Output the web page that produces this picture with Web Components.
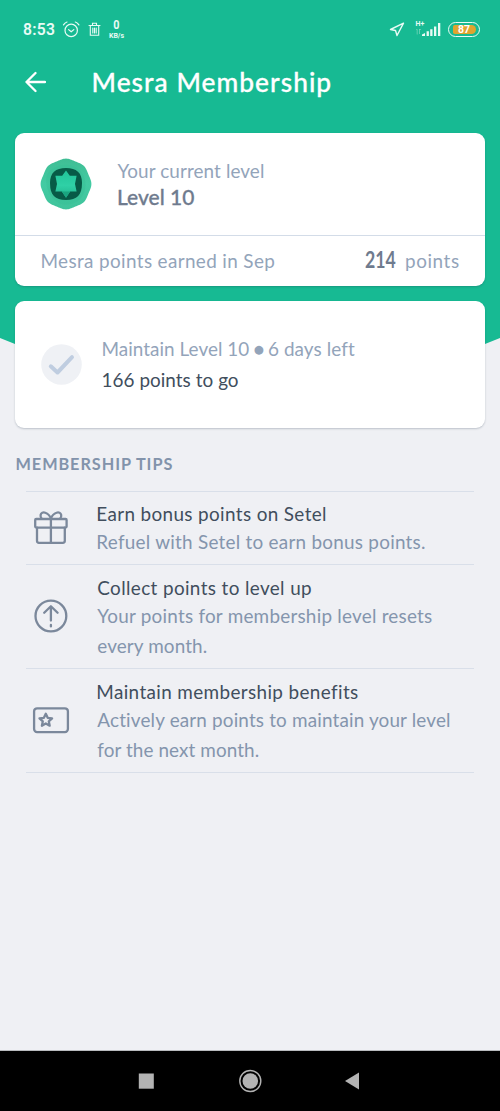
<!DOCTYPE html>
<html lang="en">
<head>
<meta charset="utf-8">
<title>Mesra Membership</title>
<style>
html,body{margin:0;padding:0;background:#eff0f4}
body{font-family:Lato,"Open Sans",sans-serif;font-size:18.9px;color:#414e5d}
</style>
</head>
<body>
<membership-screen></membership-screen>
<script>
const define=(name,html,setup)=>customElements.define(name,class extends HTMLElement{
  connectedCallback(){
    if(this.shadowRoot)return;
    const t=document.createElement('template');
    t.innerHTML=html;
    this.attachShadow({mode:'open'}).append(t.content.cloneNode(true));
    if(setup)setup(this);
  }
});

/* One line of text, tracked (or condensed) so that its glyphs span the given width. */
const ctx=document.createElement('canvas').getContext('2d');
define('fit-text','<style>:host{display:block;white-space:nowrap;width:var(--w)}span{display:inline-block;transform-origin:0 50%}</style><span><slot></slot></span>',el=>{
  const span=el.shadowRoot.querySelector('span'),cs=getComputedStyle(el),text=el.textContent,w=+el.getAttribute('w');
  ctx.font=`${cs.fontWeight} ${cs.fontSize} ${cs.fontFamily}`;
  ctx.letterSpacing='0.01px';
  const m=ctx.measureText(text);
  const ink=m.actualBoundingBoxRight+m.actualBoundingBoxLeft;
  el.style.setProperty('--w',w+'px');
  if(w>=ink)span.style.letterSpacing=(w-ink)/(text.length-1)+'px';
  else span.style.transform=`scaleX(${w/ink})`;
  span.style.marginLeft=m.actualBoundingBoxLeft+.5+'px';
});

define('status-bar',`<style>
:host{display:flex;height:58px;box-sizing:border-box;padding:19px 20px 0 22.5px;justify-content:space-between;color:#e9fbf5;font-family:Roboto,sans-serif}
.g{display:flex;align-items:flex-start}
.time{font-size:15.7px;font-weight:600;line-height:22px}
.rate{width:17px;margin-left:7px;text-align:center;display:flex;flex-direction:column;align-items:center;font-weight:700}
.zero{font-size:12px;line-height:11px;height:11px;transform:scaleX(.9);margin-top:1px}
.kb{font-size:7px;line-height:8px;height:8px;margin-top:1px;white-space:nowrap}
.bat{box-sizing:border-box;width:32px;height:15px;border:1.3px solid #e9fbf5;border-radius:8px;margin:3px 0 0 7px;display:flex;align-items:center;justify-content:center}
.bat span{width:23px;height:9px;border-radius:2px 5px 5px 2px;background:#dfa42f;color:#fff;font-size:10.5px;font-weight:700;line-height:9.5px;text-align:center}
.cell{display:flex;flex-direction:column;width:9px;margin:2px 0 0 10.5px;font-size:7px;line-height:7px;font-weight:700}
</style>
<div class="g"><fit-text class="time" w="32">8:53</fit-text>
<svg width="18" height="18" viewBox="0 0 18 18" style="margin:2px 0 0 7.5px" fill="none" stroke="#e9fbf5" stroke-width="1.2" stroke-linecap="round" stroke-linejoin="round"><circle cx="9.2" cy="9.4" r="6.2"/><path d="M6.6 8.6l2.6 2.2 2.6-2.2M1.5 3.9Q2.8 1.6 5 1M13.3 1q2.3.6 3.6 2.9"/></svg>
<svg width="13" height="16" viewBox="0 0 13 16" style="margin:3px 0 0 8px" fill="none" stroke="#e9fbf5" stroke-width="1.1" stroke-linecap="round"><path d="M1 3.5h11M4.5 3.2V1.2h4v2M2.3 3.6v9.6h8.4V3.6M4.8 6v5M6.5 6v5M8.2 6v5"/></svg>
<div class="rate"><span class="zero">0</span><span class="kb">KB/s</span></div></div>
<div class="g">
<svg width="16" height="16" viewBox="0 0 16 16" style="margin:3px 0 0" fill="none" stroke="#e9fbf5" stroke-width="1.4" stroke-linejoin="round"><path d="M14.5 1.2L1.5 7.5l5 1 1.5 5z"/></svg>
<div class="cell"><span>H+</span><svg width="8" height="7" viewBox="0 0 8 7" fill="none" stroke="#80d8bf" stroke-width=".7"><path d="M1.2 6.5v-5M.3 2L1.2 1M3.5 1v5M3 1.5h2"/></svg></div>
<svg width="19" height="14" viewBox="0 0 19 14" style="margin-top:3.5px;margin-left:-2.5px" fill="#e9fbf5"><path d="M0 13v-1.5l3-1.5v3zM4.6 8.3h2.3V13H4.6zM8.2 6.3h2.3V13H8.2zM12 3.5h2.3V13H12zM16 0h2.3v13H16z"/></svg>
<div class="bat"><span>87</span></div></div>`);

define('app-header',`<style>
:host{display:flex;height:75px;box-sizing:border-box;padding:4px 0 0 24px;color:#fff}
svg{margin-top:9px}
fit-text{font-size:26.3px;font-weight:500;line-height:40px;margin-left:47px;-webkit-text-stroke:.3px #fff}
</style>
<svg width="22" height="22" viewBox="0 0 22 22" fill="none" stroke="#fff" stroke-width="2.3" stroke-linecap="round" stroke-linejoin="round"><path d="M21 11H2.5M11.5 2l-9 9 9 9"/></svg>
<fit-text w="237">Mesra Membership</fit-text>`);

define('ui-card',`<style>
:host{display:block;background:#fff;border-radius:9px;margin:0 15px;box-sizing:border-box;box-shadow:0 1px 2px rgba(30,50,70,.24);overflow:hidden}
</style><slot></slot>`);

define('level-badge',`<style>:host{display:block;width:52px;height:52px}svg{display:block}</style>
<svg width="52" height="52" viewBox="-26 -26 52 52"><defs><linearGradient id="a" x1="0" y1="0" x2="0" y2="1"><stop offset="0" stop-color="#3fbd94"/><stop offset=".5" stop-color="#43cba3"/><stop offset="1" stop-color="#40c39b"/></linearGradient><linearGradient id="b" x1="0" y1="0" x2="0" y2="1"><stop offset="0" stop-color="#20c498"/><stop offset=".55" stop-color="#2fd0a6"/><stop offset="1" stop-color="#1fb48c"/></linearGradient></defs>
<path id="s" fill="url(#a)"/><path d="M-19.5 -8C-21 3-17 13-8 18.5C-2 22 8 21 14 15C21 8 21-4 16-11C9-20-3-21-10-17C-15-15-18-12-19.5-8Z" fill="#34bd94" opacity=".4"/>
<path d="M0-16C10.5-16 16-11 16-1C16 11 11 16 0 16C-11 16-16 11-16-1C-16-11-10.5-16 0-16Z" fill="#075b47"/>
<path d="M0-13.6L3.8-8.2H10.6L9 0L10.6 7.5H4.2L0 13.8L-4.2 7.5H-10.6L-9 0L-10.6-8.2H-3.8Z" fill="url(#b)"/><path d="M-4.2 7.5H4.2L0 13.8Z" fill="#1aa580"/></svg>`,el=>{
  /* scalloped edge with eight soft lobes */
  let d='';
  for(let i=0;i<144;i++){const t=i*Math.PI/72,r=24.9+.5*Math.cos(8*t);d+=(i?'L':'M')+(r*Math.cos(t)).toFixed(2)+' '+(r*Math.sin(t)).toFixed(2)}
  el.shadowRoot.getElementById('s').setAttribute('d',d+'Z');
});

define('level-summary',`<style>
:host{display:block;height:153px;color:#93a4ba}
.top{display:flex;height:102px;box-sizing:border-box;padding:25px 0 0 25px}
.t{margin:1px 0 0 25px}
.a{line-height:24px}
.b{font-size:21.5px;line-height:28px;font-weight:500;color:#6f7b8e;margin-left:.5px;-webkit-text-stroke:.3px #6f7b8e}
.bot{border-top:1px solid #d3dce8;display:flex;height:51px;box-sizing:border-box;padding:10px 26.5px 0 26px;line-height:27px;align-items:baseline}
.n{margin-left:auto;font-size:22px;font-weight:700;color:#6f7b8e}
.p{margin-left:10.5px}
</style>
<div class="top"><level-badge></level-badge><div class="t"><fit-text class="a" w="147">Your current level</fit-text><fit-text class="b" w="76">Level 10</fit-text></div></div>
<div class="bot"><fit-text w="233">Mesra points earned in Sep</fit-text><fit-text class="n" w="31">214</fit-text><fit-text class="p" w="53">points</fit-text></div>`);

define('level-goal',`<style>
:host{display:flex;height:127px;box-sizing:border-box;padding:33px 0 0 26px}
svg{margin-top:10px}
.t{margin-left:20px}
.a{display:flex;color:#93a4ba;line-height:30px;height:30px}
.dot{width:19.5px;text-align:center;font-family:"DejaVu Sans",sans-serif;font-size:11.5px}
.b{line-height:31px}
</style>
<svg width="41" height="41" viewBox="0 0 41 41"><circle cx="20.5" cy="20.5" r="20.3" fill="#eff1f5"/><path d="M9.8 22.3l6.7 6.2L31 13.2" fill="none" stroke="#bfcde0" stroke-width="4" stroke-linecap="round" stroke-linejoin="round"/></svg>
<div class="t"><div class="a"><fit-text w="147">Maintain Level 10</fit-text><span class="dot">●</span><fit-text w="86">6 days left</fit-text></div><fit-text class="b" w="135.5">166 points to go</fit-text></div>`);

define('tip-row',`<style>
:host{display:flex;align-items:center;box-sizing:border-box;height:104px;border-top:1px solid #d9dfe9;padding-left:6px}
:host([short]){height:73px}
.i{width:38px;height:38px;display:flex;margin:-2px 0 0 -.5px}
.t{margin-left:27.3px;padding-top:1.4px}
::slotted([slot=title]){line-height:27px;color:#414e5d}
::slotted([slot=line]){line-height:29.5px;color:#8495ad}
</style><div class="i"><slot name="icon"></slot></div><div class="t"><slot name="title"></slot><slot name="line"></slot></div>`);

const icons={
gift:'<rect x="3.2" y="11" width="31.4" height="8.6" rx="1"/><path d="M5 19.6v13.2q0 2 2 2h23.8q2 0 2-2V19.6M18.9 11v23.8M18.9 10.7C16.7 4.2 9.5 2.5 8.6 7c-.3 1.5.3 2.8 1.2 3.7M18.9 10.7C21.1 4.2 28.3 2.5 29.2 7c.3 1.5-.3 2.8-1.2 3.7"/>',
up:'<circle cx="18.9" cy="19" r="15.4"/><path d="M18.9 23.6V9.5M12.2 15.8l6.7-6.6 6.7 6.6M18.9 28v1.4"/>',
card:'<rect x="2.1" y="7.3" width="33.8" height="23.8" rx="3"/><path d="M13.8 12.7l1.9 4.1 4.4.5-3.3 3 .9 4.4-3.9-2.2-3.9 2.2.9-4.4-3.3-3 4.4-.5z"/>'};
define('tip-icon',`<style>:host{display:block;width:38px;height:38px}svg{display:block}</style><svg width="38" height="38" viewBox="0 0 38 38" fill="none" stroke="#7b889b" stroke-width="2.3" stroke-linecap="round" stroke-linejoin="round"></svg>`,el=>{el.shadowRoot.querySelector('svg').innerHTML=icons[el.getAttribute('name')]});

define('section-title',`<style>:host{display:block;padding-left:16px;font-size:16.3px;font-weight:700;line-height:24px;color:#8293ab}</style><fit-text w="157">MEMBERSHIP TIPS</fit-text>`);

define('nav-bar',`<style>:host{display:flex;height:60px;background:#000;align-items:center;border-top:1px solid #b9bbbe;margin-top:auto}svg{display:block}</style>
<svg width="500" height="60" viewBox="0 0 500 60" fill="#b3b3b3"><rect x="138.8" y="22.5" width="15" height="15.2"/><circle cx="250.3" cy="30" r="7.8"/><circle cx="250.3" cy="30" r="10.5" fill="none" stroke="#b3b3b3" stroke-width="1.4"/><path d="M345 30l14-8.5v17z"/></svg>`);

define('membership-screen',`<style>
:host{display:flex;flex-direction:column;width:500px;height:1111px;background:#eff0f4;position:relative;overflow:hidden}
.hero{position:relative;isolation:isolate;height:428px}
.hero::before{content:"";position:absolute;z-index:-1;inset:0 0 auto;height:380px;background:#17ba93;clip-path:polygon(0 0,100% 0,100% 338px,94% 350px,6% 350px,0 338px)}
.goal{margin-top:15px}
section-title{margin-top:24px}
.tips{margin:15px 26px 0;border-bottom:1px solid #d9dfe9}
</style>
<div class="hero"><status-bar></status-bar><app-header></app-header>
<ui-card><level-summary></level-summary></ui-card>
<ui-card class="goal"><level-goal></level-goal></ui-card></div>
<section-title></section-title>
<div class="tips">
<tip-row short><tip-icon slot="icon" name="gift"></tip-icon><fit-text slot="title" w="229">Earn bonus points on Setel</fit-text><fit-text slot="line" w="328.5">Refuel with Setel to earn bonus points.</fit-text></tip-row>
<tip-row><tip-icon slot="icon" name="up"></tip-icon><fit-text slot="title" w="214">Collect points to level up</fit-text><fit-text slot="line" w="336">Your points for membership level resets</fit-text><fit-text slot="line" w="110">every month.</fit-text></tip-row>
<tip-row><tip-icon slot="icon" name="card"></tip-icon><fit-text slot="title" w="261">Maintain membership benefits</fit-text><fit-text slot="line" w="354.5">Actively earn points to maintain your level</fit-text><fit-text slot="line" w="162">for the next month.</fit-text></tip-row>
</div>
<nav-bar></nav-bar>`);
</script>
</body>
</html>
